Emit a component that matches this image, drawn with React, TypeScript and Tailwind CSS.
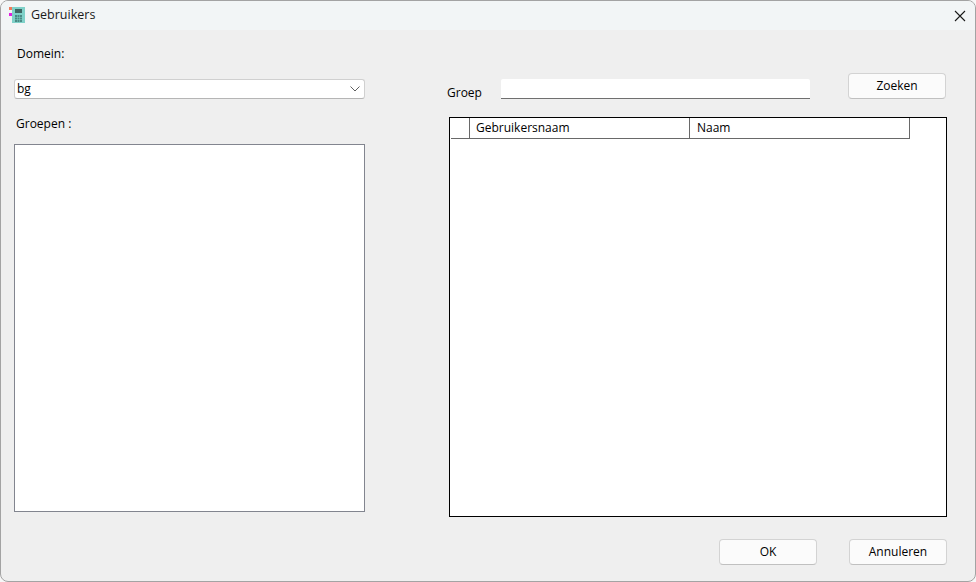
export default function App() {
  const font = 'font-["Open_Sans","Noto_Sans",sans-serif]';
  const btn =
    'w-[98px] h-[26px] rounded-[4px] border border-[#d3d3d3] border-b-[#c0c0c0] bg-[#fbfbfb] text-[12px] text-black flex items-center justify-center';

  return (
    <div className={`w-[976px] h-[582px] bg-[#f7f7f7] text-[12px] text-black ${font}`}>
      <div className="w-full h-full flex flex-col rounded-[8px] border border-[#a3a3a3] bg-[#efefef] overflow-hidden">
        {/* Title bar */}
        <div className="h-[29px] shrink-0 bg-[#f2f5f6] flex items-center pl-[8px] pr-[9px]">
          <svg width="17" height="17" viewBox="0 0 17 17" className="shrink-0">
            <rect x="3" y="0" width="13" height="16" fill="#7fd1c9" />
            <rect x="0" y="0" width="3" height="3" fill="#f0795a" />
            <rect x="0" y="6" width="3" height="3" fill="#e020e0" />
            <rect x="6" y="2" width="7" height="4" fill="#3d6663" />
            {[6, 8.5, 11].map(x =>
              [8, 10.5, 13].map(y => (
                <rect key={`${x}-${y}`} x={x} y={y} width="2" height="2" fill="#4a8a85" />
              ))
            )}
          </svg>
          <span className="ml-[5px] text-[12.5px] text-[#1a1a1a]">Gebruikers</span>
          <svg width="12" height="12" viewBox="0 0 12 12" className="ml-auto" fill="none" stroke="#1a1a1a" strokeWidth="1.1">
            <path d="M1 1 L11 11 M11 1 L1 11" />
          </svg>
        </div>

        {/* Body */}
        <div className="flex-1 flex pl-[13px] pr-[28px]">
          {/* Left column */}
          <div className="w-[351px] flex flex-col">
            <div className="ml-[3px] mt-[15px] h-[18px] leading-[18px]">Domein:</div>
            <div className="mt-[16px] h-[20px] rounded-[3px] border border-[#d0d0d0] border-b-[#b5b5b5] bg-white flex items-center pl-[2px] pr-[4px]">
              <span>bg</span>
              <svg width="10" height="6" viewBox="0 0 10 6" className="ml-auto" fill="none" stroke="#5f5f5f" strokeWidth="1">
                <path d="M0.5 0.5 L5 5 L9.5 0.5" />
              </svg>
            </div>
            <div className="ml-[2px] mt-[16px] h-[18px] leading-[18px]">Groepen :</div>
            <div className="mt-[11px] h-[368px] border border-[#82858f] bg-white" />
          </div>

          {/* Right column */}
          <div className="ml-[82px] flex-1 flex flex-col">
            <div className="h-[87px] flex">
              <span className="mt-[54px] h-[18px] leading-[18px] w-[54px]">Groep</span>
              <div className="mt-[49px] w-[309px] h-[20px] rounded-t-[2px] bg-white border-b border-[#6f6f6f]" />
              <button className={`${btn} mt-[43px] ml-[38px]`}>Zoeken</button>
            </div>
            <div className="ml-[2px] h-[400px] border border-black bg-white">
              <div className="ml-[1px] w-[459px] h-[21px] flex border-b border-r border-[#696969]">
                <div className="w-[19px] border-r border-[#696969]" />
                <div className="w-[220px] border-r border-[#696969] pl-[6px] leading-[20px]">Gebruikersnaam</div>
                <div className="flex-1 pl-[7px] leading-[20px]">Naam</div>
              </div>
            </div>
            <div className="mt-[22px] flex justify-end gap-[32px]">
              <button className={btn}>OK</button>
              <button className={btn}>Annuleren</button>
            </div>
          </div>
        </div>
      </div>
    </div>
  );
}
